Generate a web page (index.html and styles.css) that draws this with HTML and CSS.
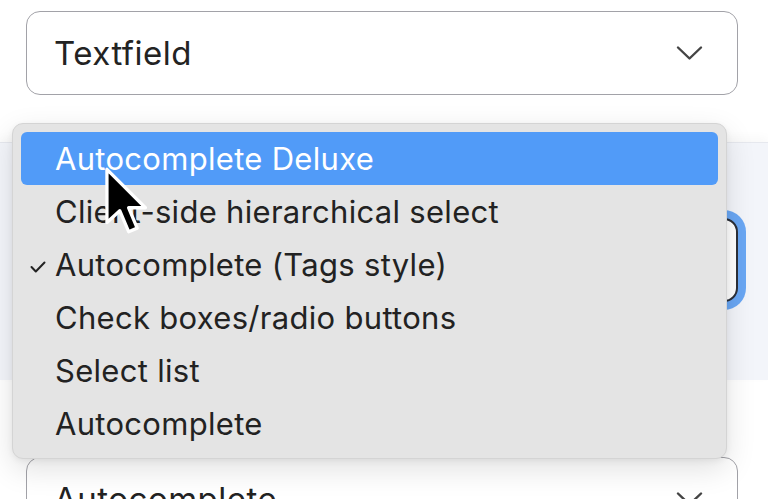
FILE: index.html
```html
<!DOCTYPE html>
<html>
<head>
<meta charset="utf-8">
<link rel="stylesheet" href="styles.css">
</head>
<body>
<div class="page">
  <div class="field top-field">
    <div class="select">
      <span class="value">Textfield</span>
      <svg class="chev" width="27" height="16" viewBox="0 0 27 16"><path d="M2 2.5 L13.5 13.5 L25 2.5" fill="none" stroke="#444" stroke-width="2.4" stroke-linecap="round" stroke-linejoin="round"/></svg>
    </div>
  </div>
  <div class="panel">
    <div class="select focused">
      <span class="value">Autocomplete (Tags style)</span>
      <svg class="chev" width="27" height="16" viewBox="0 0 27 16"><path d="M2 2.5 L13.5 13.5 L25 2.5" fill="none" stroke="#444" stroke-width="2.4" stroke-linecap="round" stroke-linejoin="round"/></svg>
    </div>
  </div>
  <div class="field bottom-field">
    <div class="select">
      <span class="value">Autocomplete</span>
      <svg class="chev" width="27" height="16" viewBox="0 0 27 16"><path d="M2 2.5 L13.5 13.5 L25 2.5" fill="none" stroke="#444" stroke-width="2.4" stroke-linecap="round" stroke-linejoin="round"/></svg>
    </div>
  </div>

  <div class="menu">
    <div class="item active">Autocomplete Deluxe</div>
    <div class="item">Client-side hierarchical select</div>
    <div class="item checked"><svg class="check" width="16" height="12" viewBox="0 0 16 12"><path d="M1.5 6 L5.8 10.5 L14.5 1.5" fill="none" stroke="#222" stroke-width="2" stroke-linecap="round" stroke-linejoin="round"/></svg>Autocomplete (Tags style)</div>
    <div class="item">Check boxes/radio buttons</div>
    <div class="item">Select list</div>
    <div class="item">Autocomplete</div>
  </div>

  <svg class="cursor" width="46" height="75" viewBox="-1.2 -1.2 14 22"><path d="M0 0 L0 16.2 L3.9 12.6 L6.6 19 L9.2 17.9 L6.6 11.7 L11.7 11.7 Z" fill="#000" stroke="#fff" stroke-width="1" stroke-linejoin="round"/></svg>
</div>
</body>
</html>
```

FILE: styles.css
```css
html, body {
  margin: 0;
  padding: 0;
  background: #ffffff;
}
body {
  font-family: Inter, "Noto Sans", "Liberation Sans", sans-serif;
  color: #222;
  overflow: hidden;
}
.page {
  position: relative;
  width: 768px;
  height: 499px;
  overflow: hidden;
}
.field {
  padding: 0 30px 0 26px;
}
.top-field {
  padding-top: 11px;
  height: 142px;
  box-sizing: border-box;
}
.select {
  height: 84px;
  box-sizing: border-box;
  border: 1.5px solid #a2a2a8;
  border-radius: 14px;
  background: #fff;
  display: flex;
  align-items: center;
  justify-content: space-between;
  padding: 0 34px 0 27px;
}
.value {
  font-size: 33px;
  letter-spacing: 0.5px;
  color: #232323;
}
.chev {
  display: block;
}
.panel {
  height: 238px;
  box-sizing: border-box;
  background: #f3f5fa;
  border-top: 1px solid #e6e8ee;
  box-shadow: 0 -4px 10px rgba(0, 0, 0, 0.03);
  padding: 75px 30px 0 26px;
}
.select.focused {
  border: 2px solid #2b2f38;
  box-shadow: 0 0 0 8px #6aa7f4;
}
.bottom-field {
  padding-top: 77px;
}
.menu {
  position: absolute;
  left: 12px;
  top: 123px;
  width: 715px;
  height: 336px;
  box-sizing: border-box;
  background: #e4e4e4;
  border: 1px solid #d4d4d4;
  border-radius: 11px;
  box-shadow: 0 10px 30px rgba(0, 0, 0, 0.12), 0 2px 6px rgba(0, 0, 0, 0.06);
  padding: 8px 8px;
  display: flex;
  flex-direction: column;
}
.item {
  position: relative;
  height: 53.3px;
  display: flex;
  align-items: center;
  padding-left: 34px;
  font-size: 31px;
  letter-spacing: 0.3px;
  color: #222;
  border-radius: 6px;
}
.item.active {
  background: #519bf8;
  color: #fff;
}
.check {
  position: absolute;
  left: 9px;
  top: 23px;
}
.cursor {
  position: absolute;
  left: 103px;
  top: 164px;
}
```
